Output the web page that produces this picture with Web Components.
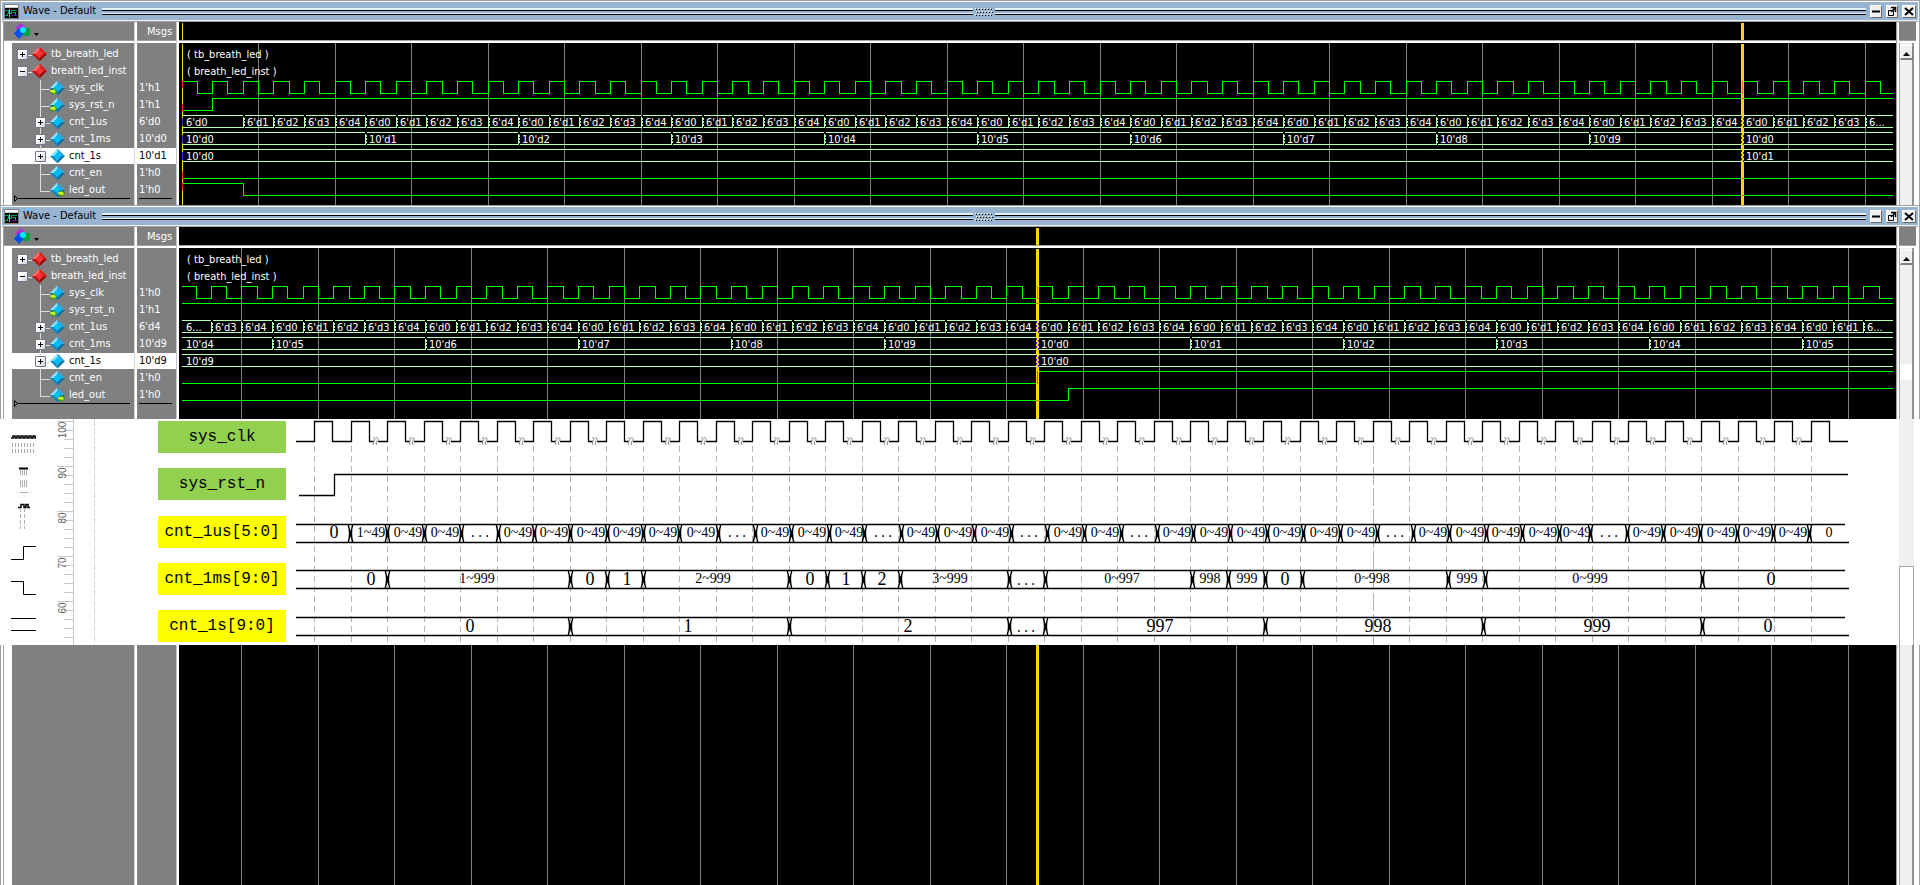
<!DOCTYPE html>
<html lang="en">
<head>
<meta charset="utf-8">
<title>Wave - Default</title>
<style>
    html, body { height: 100%; }
    body {
        margin: 0;
        display: flex;
        flex-direction: column;
        overflow: hidden;
        background: #fff;
        font-family: "DejaVu Sans Condensed", "DejaVu Sans", sans-serif;
        font-size: 11px;
    }
    wave-window:last-of-type { flex: 1; }
</style>
</head>
<body>

<wave-window caption="Wave - Default" run="reset"></wave-window>
<wave-window caption="Wave - Default" run="rollover">
    <timing-diagram></timing-diagram>
</wave-window>

<script>
const PERIOD = 30.6;

// the two simulation runs shown; times are in clock cycles
const RUNS = {
    reset: {
        origin: 3, cursor: 51, startMark: true, gridOffset: 0,
        values: ['', '', "1'h1", "1'h1", "6'd0", "10'd0", "10'd1", "1'h0", "1'h0"],
        rst: [[0, 0], [1, 1]],
        us: t => t < 2 ? (t === 0 ? 0 : null) : (t - 1) % 5,
        ms: [[0, 0], ...range(1, 10).map(k => [1 + 5 * k, k % 10])],
        s: [[0, 0], [51, 1]],
        en: [[0, 0]],
        led: [[0, 1], [2, 0]]
    },
    rollover: {
        origin: 1.75, cursor: 28, startMark: false, gridOffset: 2,
        values: ['', '', "1'h0", "1'h1", "6'd4", "10'd9", "10'd9", "1'h0", "1'h0"],
        rst: [[0, 1]],
        us: t => (t + 2) % 5,
        ms: [[0, 4], ...range(0, 10).map(k => [3 + 5 * k, (5 + k) % 10])],
        s: [[0, 9], [28, 0]],
        en: [[0, 0], [28, 1]],
        led: [[0, 0], [29, 1]]
    }
};

const SIGNALS = [
    { name: 'tb_breath_led', kind: 'scope', box: '+' },
    { name: 'breath_led_inst', kind: 'scope', box: '-' },
    { name: 'sys_clk', kind: 'in' },
    { name: 'sys_rst_n', kind: 'in' },
    { name: 'cnt_1us', kind: 'net', box: '+' },
    { name: 'cnt_1ms', kind: 'net', box: '+' },
    { name: 'cnt_1s', kind: 'net', box: '+', selected: true },
    { name: 'cnt_en', kind: 'net' },
    { name: 'led_out', kind: 'out', last: true }
];

function range(from, to) {
    return Array.from({ length: to - from + 1 }, (_, i) => from + i);
}

class SignalIcon extends HTMLElement {
    connectedCallback() {
        const kind = this.getAttribute('kind');
        const c = kind === 'scope'
            ? ['#ff6a6a', '#e01c1c', '#c01010', '#9c0808', '#f83030']
            : ['#8fe4ff', '#28a8e0', '#1488c0', '#0870a0', '#00bff8'];
        const arrow = 'M0 1h3V-1L7 2.500L3 6V4H0z';
        const at = { in: 'translate(0 9)', out: 'translate(8 9)' }[kind];
        this.attachShadow({ mode: 'open' }).innerHTML = `
        <style>
            :host { display: block; width: 16px; height: 16px; flex: none; }
            svg { display: block; overflow: visible; }
        </style>
        <svg width="16" height="16" aria-hidden="true">
            <path d="M7.500 .5L0 8h4l3.500-4z" fill="${c[0]}"/>
            <path d="M7.500 .5L15 8h-4L7.500 4z" fill="${c[1]}"/>
            <path d="M0 8l7.500 7.500V12L4 8z" fill="${c[2]}"/>
            <path d="M15 8l-7.500 7.500V12L11 8z" fill="${c[3]}"/>
            <path d="M7.500 4L11.500 8l-4 4-4-4z" fill="${c[4]}"/>
            ${at ? `<g transform="${at}"><path d="${arrow}" fill="#a8f000" stroke="#287800" stroke-width=".7"/><path d="M0 2h4" stroke="#f4ff90"/></g>` : ''}
        </svg>`;
    }
}

class TitleBar extends HTMLElement {
    connectedCallback() {
        this.attachShadow({ mode: 'open' }).innerHTML = `
        <style>
            :host {
                display: flex;
                align-items: center;
                height: 18px;
                padding: 0 2px;
                background: #99b4d1;
                border-top: 1px solid #fff;
                border-bottom: 1px solid #f0f0f0;
            }
            .logo { flex: none; margin-right: 4px; }
            .caption { white-space: nowrap; line-height: 16px; margin-right: 6px; }
            .grip { flex: 1; display: flex; align-items: center; }
            .rails {
                flex: 1;
                height: 2px;
                padding-bottom: 2px;
                border-top: 2px solid #dff4fb;
                border-bottom: 1px solid #000;
                background: linear-gradient(#000 0 1px, #99b4d1 1px 2px, #99b4d1 2px 3px, #dff4fb 3px);
            }
            .dots { flex: none; margin: 0 2px; }
            .buttons { display: flex; gap: 4px; margin-left: 4px; }
            button {
                width: 12px;
                height: 13px;
                padding: 0;
                background: #f0f0f0;
                border: 1px solid;
                border-color: #fff #696969 #696969 #fff;
            }
            button:last-child { width: 14px; }
            button svg { display: block; margin: auto; }
        </style>
        <svg class="logo" width="15" height="15" shape-rendering="crispEdges" aria-hidden="true">
            <path d="M0 0h15v15H0z" fill="#808080"/>
            <path d="M1 1h13v2H1z" fill="#fff"/><path d="M1 3h13v1H1z" fill="#c8c8c8"/>
            <path d="M1 4h13v10H1z"/>
            <path d="M1 6.500h3v3h3v-3h6M1 11.500h2v-3M8 8.500h3v3" fill="none" stroke="#00a060"/>
            <path d="M5.500 5v8" stroke="#40e0e0"/><path d="M8 11.500h5" stroke="#3020c0"/>
        </svg>
        <span class="caption">${this.getAttribute('caption')}</span>
        <span class="grip">
            <span class="rails"></span>
            <svg class="dots" width="18" height="9" shape-rendering="crispEdges" aria-hidden="true">
                <g stroke="#fff" stroke-dasharray="1 2"><path d="M0 1.500h18M1 4.500h17M0 7.500h18"/></g>
                <g stroke="#000" stroke-dasharray="1 2"><path d="M1 2.500h17M2 5.500h16M1 8.500h17"/></g>
            </svg>
            <span class="rails"></span>
        </span>
        <span class="buttons">
            <button aria-label="Minimize"><svg width="10" height="11"><path d="M1 5.500h8" stroke="#000" stroke-width="2"/></svg></button>
            <button aria-label="Undock"><svg width="10" height="11" fill="none" stroke="#000"><path d="M1.500 4.500h5v5h-5z"/><path d="M4 1.500h4.500V6M4 6l4.500-4.500" stroke-width="1.500"/></svg></button>
            <button aria-label="Close"><svg width="12" height="11"><path d="M2 2l8 7M10 2l-8 7" stroke="#000" stroke-width="2"/></svg></button>
        </span>`;
    }
}

class SignalTree extends HTMLElement {
    connectedCallback() {
        const rows = SIGNALS.map(s => `
            <li class="${s.kind === 'scope' ? 'scope' : 'child'} ${s.selected ? 'selected' : ''} ${s.last ? 'last' : ''}">
                <span class="branch">${s.box ? `<button aria-label="${s.box === '+' ? 'Expand' : 'Collapse'} ${s.name}"><svg width="9" height="9" stroke="#000" stroke-width="1" shape-rendering="crispEdges"><path d="M2 4.500h5${s.box === '+' ? 'M4.500 2v5' : ''}"/></svg></button>` : ''}</span>
                <signal-icon kind="${s.kind}"></signal-icon>
                <span>${s.name}</span>
            </li>`).join('');
        this.attachShadow({ mode: 'open' }).innerHTML = `
        <style>
            :host { display: block; background: #808080; color: #fff; margin-left: 8px; }
            ul { list-style: none; margin: 0; padding: 3px 0 0; display: grid; gap: 1px; }
            li { display: flex; align-items: center; height: 16px; line-height: 16px; white-space: nowrap; }
            li > span:last-child { margin-left: 3px; }
            .selected { background: #fff; color: #000; }
            .branch { display: flex; align-items: center; position: relative; height: 17px; flex: none; }
            .scope .branch { width: 20px; padding-left: 5px; box-sizing: border-box; }
            .child .branch { width: 15px; margin-left: 23px; }
            /* connector lines */
            .branch::after {
                content: "";
                position: absolute;
                right: 0;
                top: 9px;
                width: 6px;
                height: 1px;
                background: #dcdcdc;
            }
            .child .branch::after { width: 10px; }
            .child .branch::before {
                content: "";
                position: absolute;
                left: 5px;
                top: 0;
                width: 1px;
                height: 17px;
                background: #dcdcdc;
            }
            .last .branch::before { height: 9px; }
            button {
                position: relative;
                z-index: 1;
                width: 11px;
                height: 11px;
                padding: 0;
                border: 1px solid #707888;
                border-radius: 1px;
                background: linear-gradient(135deg, #fff 40%, #c8d0dc);
            }
            button svg { display: block; }
            .end { display: block; margin: -3px 0 0 2px; width: calc(100% - 6px); height: 7px; }
        </style>
        <ul>${rows}</ul>
        <svg class="end" aria-hidden="true"><path d="M.5 .5l3 3-3 3z" fill="none" stroke="#000"/><path d="M3 3.500h2000" stroke="#000"/></svg>`;
    }
}

class SignalValues extends HTMLElement {
    connectedCallback() {
        const { values } = RUNS[this.getAttribute('run')];
        this.attachShadow({ mode: 'open' }).innerHTML = `
        <style>
            :host { display: block; background: #808080; color: #fff; }
            ul { list-style: none; margin: 0; padding: 3px 0 0; display: grid; gap: 1px; }
            li { height: 16px; line-height: 16px; padding-left: 2px; white-space: nowrap; }
            .selected { background: #fff; color: #000; }
            hr { margin: 0 4px 0 2px; border: 0; border-top: 1px solid #000; }
        </style>
        <ul>${values.map((v, i) => `<li class="${SIGNALS[i].selected ? 'selected' : ''}">${v}</li>`).join('')}</ul>
        <hr>`;
    }
}

class WaveCanvas extends HTMLElement {
    constructor() {
        super();
        this.attachShadow({ mode: 'open' });
    }

    connectedCallback() {
        this.run = RUNS[this.getAttribute('run')];
        this.draw();
        new ResizeObserver(() => this.draw()).observe(this);
    }

    x(t) { return Math.floor(this.run.origin + t * PERIOD) + 0.5; }

    level(row, steps, end) {
        const y = v => 4.5 + 17 * row + (v ? 0 : 12);
        let d = `M3 ${y(steps[0][1])}`;
        steps.slice(1).forEach(([t, v]) => { d += `H${this.x(t)}V${y(v)}`; });
        return `<path d="${d}H${end}"/>`;
    }

    bus(row, steps, end, prefix) {
        const top = 4.5 + 17 * row;
        const bottom = top + 12;
        let lines = '';
        let labels = '';
        steps.forEach(([t, v], i) => {
            const a = Math.max(this.x(t), 3.5);
            const b = i + 1 < steps.length ? this.x(steps[i + 1][0]) : end;
            if (a >= end) return;
            lines += `M${i ? a + 1 : 3} ${top}H${Math.min(b - 0.5, end)}M${i ? a + 1 : 3} ${bottom}H${Math.min(b - 0.5, end)}`;
            if (i) lines += `M${a - 0.5} ${top + 1}v3l1 2v1l-1 2v3M${a + 0.5} ${top + 2}v2M${a + 0.5} ${top + 8}v2`;
            const narrow = Math.min(b, end) - Math.max(this.run.origin + t * PERIOD, 3) < 30;
            const text = narrow ? `${prefix[0]}...` : prefix + v;
            labels += `<text x="${Math.floor(a) + 4}" y="${top + 10.5}">${text}</text>`;
        });
        return [`<path d="${lines}"/>`, labels];
    }

    // the cursor recolours whatever it crosses
    crossings(x) {
        const { rst, en, led, cursor } = this.run;
        let out = '';
        [[3, rst], [7, en], [8, led]].forEach(([row, steps]) => {
            const y = 4 + 17 * row;
            const [, v] = steps.filter(([t]) => t <= cursor).pop();
            out += steps.some(([t]) => t === cursor && t > 0)
                ? `<path d="M${x} ${y}v13" stroke="#f40"/>`
                : `<path d="M${x - 1.5} ${y + (v ? 0.5 : 12.5)}h3" stroke="#f60"/>`;
        });
        out += `<path d="M${x} 38v13" stroke="#f62"/>`;
        [4, 5, 6].forEach(row => {
            out += `<path d="M${x - 1} ${5 + 17 * row}v12M${x + 1} ${7 + 17 * row}v10" stroke="#4020c0" stroke-dasharray="2 2"/>`;
        });
        return out;
    }

    draw() {
        const width = this.clientWidth;
        const run = this.run;
        const end = width - 3;
        const cycles = Math.ceil(width / PERIOD);

        let grid = '';
        for (let t = run.gridOffset || 2.5; t < cycles; t += 2.5) {
            if (this.x(t) < end) grid += `M${this.x(t)} 0V2000`;
        }

        let clk = 'M3 38.5';
        for (let t = 0; t < cycles; t++) {
            if (t) clk += `H${this.x(t)}V38.5`;
            if (this.x(t + 0.5) < end) clk += `H${this.x(t + 0.5)}V50.5`;
            if (this.x(t + 1) >= end) break;
        }
        clk += `H${end}`;

        const us = range(0, cycles).map(t => [t, run.us(t)]).filter(([, v]) => v !== null);
        const [usLines, usText] = this.bus(4, us, end, "6'd");
        const [msLines, msText] = this.bus(5, run.ms, end, "10'd");
        const [sLines, sText] = this.bus(6, run.s, end, "10'd");
        const cx = this.x(run.cursor);

        this.shadowRoot.innerHTML = `
        <style>
            :host { display: flex; flex-direction: column; background: #000; min-width: 0; overflow: hidden; }
            svg { display: block; width: 100%; flex: none; shape-rendering: crispEdges; fill: none; }
            .ruler { height: 18px; border-bottom: 1px solid #a0a0a0; }
            .plot { flex: 1 1 0; min-height: 0; border-top: 2px solid #fff; }
            text { fill: #fff; white-space: pre; }
        </style>
        <svg class="ruler" aria-hidden="true">
            <path d="M${cx} 1V18" stroke="#ffd700" stroke-width="3"/>
            ${run.startMark ? '<path d="M3.500 1V18" stroke="#ffd700"/>' : ''}
        </svg>
        <svg class="plot">
            <path d="${grid}" stroke="#808080"/>
            <g stroke="#00ff00">
                <path d="${clk}"/>
                ${this.level(3, run.rst, end)}
                ${this.level(7, run.en, end)}
                ${this.level(8, run.led, end)}
            </g>
            <g stroke="#b4ffb4">${usLines}${msLines}${sLines}</g>
            <text x="8" y="15">( tb_breath_led )</text>
            <text x="8" y="32">( breath_led_inst )</text>
            ${usText}${msText}${sText}
            <path d="M${cx} 1V2000" stroke="#ffd700" stroke-width="3"/>
            ${this.crossings(cx)}
            ${run.startMark ? `
            <path d="M3.500 1V2000" stroke="#ffd700"/>
            <path d="M3.500 38v7M3.500 61v7M3.500 129v7M3.500 140v7" stroke="#f22"/>
            <path d="M3.500 75v8M3.500 92v8M3.500 109v8" stroke="#4020c0"/>` : ''}
        </svg>`;
    }
}

class WaveWindow extends HTMLElement {
    connectedCallback() {
        const run = this.getAttribute('run');
        this.attachShadow({ mode: 'open' }).innerHTML = `
        <style>
            :host {
                display: flex;
                flex-direction: column;
                position: relative;
                box-sizing: border-box;
                min-height: 205px;
                border-top: 1px solid #a0a0a0;
                background: #fff;
            }
            .frame { display: flex; flex-direction: column; flex: 1; border-left: 1px solid #a0a0a0; border-right: 1px solid #a0a0a0; padding: 0 1px; }
            .body { flex: 1; display: grid; grid-template-columns: 135px 42px 1fr 22px; border-top: 1px solid #a0a0a0; }
            .col { display: flex; flex-direction: column; min-width: 0; }
            .head { height: 18px; background: #808080; color: #fff; border-bottom: 1px solid #a0a0a0; margin-bottom: 2px; display: flex; align-items: center; }
            .names { border-left: 1px solid #a0a0a0; border-right: 1px solid #d4d4d4; margin: 0 2px 0 1px; }
            .msgs { border-right: 1px solid #c8c8c8; margin-right: 2px; }
            .msgs .head { padding-left: 10px; }
            signal-tree, signal-values { flex: 1; }
            .pick { display: flex; align-items: center; gap: 4px; border: 0; padding: 0 0 0 10px; background: none; }
            .scroll { border-left: 1px solid #a0a0a0; margin-right: 1px; padding-left: 2px; background: linear-gradient(90deg, #f0f0f0 1px, #fff 1px); }
            .scroll .head { width: 17px; }
            .track { flex: 1; width: 12px; border-left: 1px solid #a0a0a0; border-right: 2px solid #909090; background: #f0f0f0; }
            .up {
                display: block;
                width: 13px;
                height: 15px;
                margin-top: 2px;
                padding: 0;
                border: 1px solid;
                border-color: #fff #808080 #808080 #fff;
                border-bottom-width: 2px;
                background: #f0f0f0;
            }
            .thumb { height: 16px; margin-top: 99px; background: #fff; }
            ::slotted(timing-diagram) { position: absolute; left: 0; right: 0; top: 213px; }
        </style>
        <div class="frame">
            <title-bar caption="${this.getAttribute('caption')}"></title-bar>
            <div class="body">
                <div class="col names">
                    <div class="head">
                        <button class="pick" aria-label="Object filter">
                            <svg width="16" height="16" aria-hidden="true">
                                <path d="M7 0l5 5-5 4-6-4z" fill="#b030e0"/>
                                <path d="M9 5h7v8H9z" fill="#10a040"/>
                                <path d="M5 5l5 5.500L5 16l-5-5.500z" fill="#0050f0"/>
                                <circle cx="9" cy="7" r="3" fill="#00e8ff"/>
                            </svg>
                            <svg width="5" height="9" aria-hidden="true"><path d="M0 6h5l-2.500 3z"/></svg>
                        </button>
                    </div>
                    <signal-tree></signal-tree>
                </div>
                <div class="col msgs">
                    <div class="head">Msgs</div>
                    <signal-values run="${run}"></signal-values>
                </div>
                <wave-canvas run="${run}"></wave-canvas>
                <div class="col scroll">
                    <div class="head"></div>
                    <div class="track">
                        <button class="up" aria-label="Scroll up"><svg width="11" height="9"><path d="M2 7h7L5.500 3z"/></svg></button>
                        ${run === 'rollover' ? '<div class="thumb"></div>' : ''}
                    </div>
                </div>
            </div>
        </div>
        <slot></slot>`;
    }
}

// timing chart: transitions and captions, x in pixels
const CHART = {
    us: {
        y: 105,
        edges: [350, 387, 424, 461, 498, 534, 570, 607, 643, 679, 718, 755, 791, 829, 864, 901, 937, 974, 1011, 1047, 1084, 1121, 1157, 1193,
            1230, 1267, 1303, 1340, 1377, 1413, 1449, 1486, 1522, 1559, 1590, 1627, 1663, 1700, 1737, 1773, 1809],
        gaps: [461, 718, 864, 1011, 1121, 1377, 1590]
    },
    ms: {
        y: 151,
        edges: [387, 570, 607, 643, 789, 827, 863, 900, 1009, 1045, 1192, 1228, 1265, 1302, 1448, 1485, 1702],
        labels: [[371, '0'], [477, '1~999'], [590, '0'], [627, '1'], [713, '2~999'], [810, '0'], [846, '1'], [882, '2'], [950, '3~999'],
            [1026, '...'], [1122, '0~997'], [1210, '998'], [1247, '999'], [1285, '0'], [1372, '0~998'], [1467, '999'], [1590, '0~999'], [1771, '0']]
    },
    s: {
        y: 198,
        edges: [570, 789, 1009, 1045, 1265, 1483, 1702],
        labels: [[470, '0'], [688, '1'], [908, '2'], [1026, '...'], [1160, '997'], [1378, '998'], [1597, '999'], [1768, '0']]
    }
};

class TimingDiagram extends HTMLElement {
    row({ y, edges }) {
        let d = `M296 ${y}.500H1845M296 ${y + 18}.500H1849`;
        edges.forEach(x => { d += `M${x - 2} ${y}q3 9 0 19M${x + 3} ${y}q-3 9 0 19M${x - 2} ${y}l5 19M${x + 3} ${y}l-5 19`; });
        return d;
    }

    captions({ y, labels }, small) {
        return labels.map(([x, text]) => {
            const size = text === '...' ? 'dots' : (small && text.length > 1 ? 'small' : 'big');
            return `<text class="${size}" x="${x}" y="${y + (size === 'small' ? 13 : 15)}">${text}</text>`;
        }).join('');
    }

    connectedCallback() {
        const rise = k => Math.floor(314.5 + 36.5 * k);
        let clk = 'M296 22.5';
        let drops = '';
        let breaks = '';
        range(0, 41).forEach(k => {
            const x = rise(k);
            clk += `H${x + 0.5}V2.5H${x + 18.5}V22.5`;
            drops += `<path d="M${x + 0.5} 27V226" stroke-dasharray="${k === 29 ? '18 3' : '6 4'}"/>`;
            if (k > 0 && k < 41) {
                breaks += `<path d="M${x + 23} 22h4" stroke="#fff" stroke-width="4"/><path d="M${x + 22} 19c3-1 2 2 1 3s-1 3 0 4M${x + 25} 19c3-1 2 2 1 3s-1 3 0 4" stroke="#888"/>`;
            }
        });

        const us = CHART.us;
        const usText = us.edges.map((x, i) => {
            const next = us.edges[i + 1];
            if (!next) return '<text class="small" x="1829" y="118">0</text>';
            const text = us.gaps.includes(x) ? '...' : i === 0 ? '1~49' : '0~49';
            const [size, shift] = text === '...' ? ['dots', 0] : ['small', 2];
            return `<text class="${size}" x="${Math.round((x + next) / 2) + shift}" y="118">${text}</text>`;
        }).join('');

        let ticks = '';
        range(0, 24).forEach(i => { ticks += `M${i % 5 ? 64 : 57} ${2 + 9 * i}.500H73`; });
        const scale = [[100, 11], [90, 54], [80, 99], [70, 144], [60, 189]]
            .map(([n, y]) => `<text transform="translate(66 ${y}) rotate(-90)">${n}</text>`).join('');

        this.attachShadow({ mode: 'open' }).innerHTML = `
        <style>
            :host { display: flex; height: 226px; background: #fff; color: #000; }
            svg { display: block; fill: none; }
            .stencil { flex: none; }
            .stencil text { font: 10px "Liberation Sans", sans-serif; fill: #606060; text-anchor: middle; }
            .names {
                flex: none;
                width: 128px;
                box-sizing: border-box;
                padding: 2px 0 3px;
                display: flex;
                flex-direction: column;
                justify-content: space-between;
                font: 16px/32px "Liberation Mono", monospace;
                text-align: center;
            }
            .names span { height: 32px; background: #ff0; }
            .names .ctl { background: #92d050; }
            .chart { flex: 1; min-width: 0; overflow: hidden; }
            .chart text { fill: #000; text-anchor: middle; }
            .chart .ink { stroke: #000; stroke-width: 1.3; }
            .big { font: 18px "Liberation Serif", serif; }
            .small { font: 14px "Liberation Serif", serif; }
            .dots { font: 12px "Liberation Mono", monospace; }
            .track { flex: none; width: 15px; margin-right: 6px; background: #f0f0f0; display: flex; flex-direction: column; justify-content: flex-end; }
            .thumb { height: 78px; border: 1px solid #a8a8a8; border-bottom: 0; background: #fff; }
        </style>
        <svg class="stencil" width="158" height="226">
            <g stroke="#000" stroke-width="1">
                <path d="M11 19h2v-2h2v2h2v-2h2v2h2v-2h2v2h2v-2h2v2h2v-2h2v2h2v-2h2v2h1" stroke-width="1.500"/>
                <path d="M19 49.500h9" stroke-width="2"/>
                <path d="M18 88.500h3v-3h3v3h2v-3h2v3h2" stroke-width="1.500"/>
                <path d="M11 140.500h12.500v-13H36M11 162.500h12.500v13H36M11 199.500h25M11 211.500h25"/>
            </g>
            <g stroke="#b0b0b0" stroke-dasharray="4 2">
                <path d="M12.500 24v11M15.500 24v11M18.500 24v11M21.500 24v11M24.500 24v11M27.500 24v11M30.500 24v11M33.500 24v11"/>
                <path d="M20.500 89v21M24.500 89v21"/>
            </g>
            <path d="M20.500 51v5M22.500 51v5M24.500 51v5M26.500 51v5M20.500 61v7M22.500 61v7M24.500 61v7M26.500 61v7M20 73.500h8" stroke="#b0b0b0"/>
            <path d="${ticks}M73.500 0V226" stroke="#c8c8c8"/>
            <path d="M94.500 0V226" stroke="#d8d8d8" stroke-dasharray="7 2"/>
            ${scale}
        </svg>
        <div class="names">
            <span class="ctl">sys_clk</span>
            <span class="ctl">sys_rst_n</span>
            <span>cnt_1us[5:0]</span>
            <span>cnt_1ms[9:0]</span>
            <span>cnt_1s[9:0]</span>
        </div>
        <svg class="chart" height="226">
            <g transform="translate(-286 0)">
                <g stroke="#b4b4b4">${drops}</g>
                <path class="ink" d="${clk}H1848M299 76.500H334.500V55.500H1848"/>
                ${breaks}
                <path class="ink" d="${this.row(CHART.us)}${this.row(CHART.ms)}${this.row(CHART.s)}"/>
                <text class="big" x="334" y="119">0</text>
                ${usText}
                ${this.captions(CHART.ms, true)}
                ${this.captions(CHART.s, false)}
            </g>
        </svg>
        <div class="track"><div class="thumb"></div></div>`;
    }
}

customElements.define('signal-icon', SignalIcon);
customElements.define('title-bar', TitleBar);
customElements.define('signal-tree', SignalTree);
customElements.define('signal-values', SignalValues);
customElements.define('wave-canvas', WaveCanvas);
customElements.define('wave-window', WaveWindow);
customElements.define('timing-diagram', TimingDiagram);
</script>
</body>
</html>
